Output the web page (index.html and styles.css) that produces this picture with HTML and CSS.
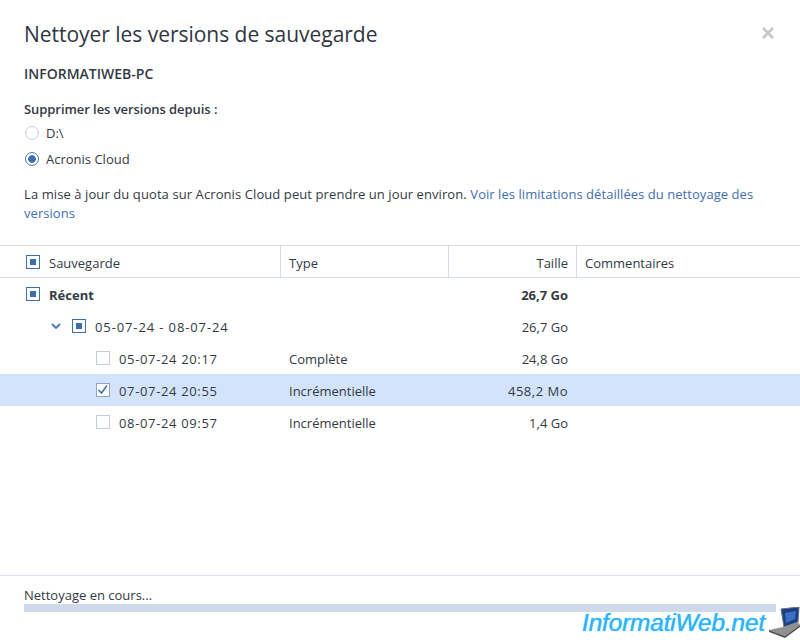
FILE: index.html
```html
<!DOCTYPE html>
<html lang="fr">
<head>
<meta charset="utf-8">
<title>Nettoyer les versions de sauvegarde</title>
<link rel="stylesheet" href="styles.css">
</head>
<body>
<div class="dialog">
  <header class="head">
    <h1 class="title">Nettoyer les versions de sauvegarde</h1>
    <svg class="close" width="14" height="14" viewBox="0 0 14 14"><path d="M2 2l10 10M12 2L2 12" stroke="#c4c6c9" stroke-width="2.6" fill="none"/></svg>
  </header>
  <div class="machine">INFORMATIWEB-PC</div>
  <div class="label">Supprimer les versions depuis :</div>
  <div class="radio-row"><span class="radio"></span>D:\</div>
  <div class="radio-row"><span class="radio on"></span>Acronis Cloud</div>
  <p class="note">La mise à jour du quota sur Acronis Cloud peut prendre un jour environ. <a class="link">Voir les limitations détaillées du nettoyage des versions</a></p>

  <div class="table">
    <div class="row thead">
      <div class="cell first"><span class="box mixed"></span>Sauvegarde</div>
      <div class="cell sep">Type</div>
      <div class="cell sep right">Taille</div>
      <div class="cell sep">Commentaires</div>
    </div>
    <div class="row">
      <div class="cell first bold"><span class="box mixed"></span>Récent</div>
      <div class="cell"></div>
      <div class="cell right bold">26,7 Go</div>
      <div class="cell"></div>
    </div>
    <div class="row">
      <div class="cell lvl1">
        <svg class="chev" width="10" height="6" viewBox="0 0 10 6"><path d="M1 1l4 4 4-4" stroke="#4a76b4" stroke-width="1.8" fill="none"/></svg>
        <span class="box mixed"></span><span class="range">05-07-24 - 08-07-24</span>
      </div>
      <div class="cell"></div>
      <div class="cell right">26,7 Go</div>
      <div class="cell"></div>
    </div>
    <div class="row">
      <div class="cell lvl2"><span class="box"></span><span class="date">05-07-24 20:17</span></div>
      <div class="cell">Complète</div>
      <div class="cell right">24,8 Go</div>
      <div class="cell"></div>
    </div>
    <div class="row selected">
      <div class="cell lvl2">
        <span class="box checked"><svg width="12" height="12" viewBox="0 0 12 12"><path d="M1.5 6l3 3 5.5-7.5" stroke="#3f6db0" stroke-width="1.5" fill="none"/></svg></span><span class="date">07-07-24 20:55</span>
      </div>
      <div class="cell">Incrémentielle</div>
      <div class="cell right wide">458,2 Mo</div>
      <div class="cell"></div>
    </div>
    <div class="row">
      <div class="cell lvl2"><span class="box"></span><span class="date">08-07-24 09:57</span></div>
      <div class="cell">Incrémentielle</div>
      <div class="cell right">1,4 Go</div>
      <div class="cell"></div>
    </div>
  </div>

  <footer class="foot">
    <div class="status">Nettoyage en cours...</div>
    <div class="bar"></div>
  </footer>
</div>

<div class="watermark">
  <span class="wm-text">InformatiWeb.net</span>
  <svg class="laptop" width="32" height="32" viewBox="0 0 32 32">
    <path d="M13 2L31 0 30 15 16 20z" fill="#1b3f86" stroke="#6a6f78" stroke-width="1"/>
    <path d="M17 6l11-2-1 8-9 4z" fill="#3b6fc4"/>
    <path d="M15 20l15-5 2 3-15 11L1 23z" fill="#8f9190"/>
    <path d="M1 23l16 6 15-11v2L17 31 1 25z" fill="#4f5152"/>
  </svg>
</div>
</body>
</html>
```

FILE: styles.css
```css
* { box-sizing: border-box; }
html, body { margin: 0; height: 100%; }
body {
  background: #fff;
  font-family: "Open Sans", "Noto Sans", sans-serif;
  font-size: 13px;
  color: #333a45;
  overflow: hidden;
  position: relative;
}
.dialog {
  width: 800px;
  height: 640px;
  display: flex;
  flex-direction: column;
}
.head {
  display: flex;
  justify-content: space-between;
  align-items: center;
  padding: 18px 25px 0 24px;
  height: 49px;
}
.title {
  margin: 0;
  font-size: 21px;
  font-weight: 400;
  line-height: 30px;
  letter-spacing: -0.03px;
  color: #2f3642;
}
.close { margin-top: -1px; }
.machine {
  margin: 15px 24px 0;
  font-size: 14px;
  font-weight: 600;
  line-height: 20px;
}
.label {
  margin: 15px 24px -1px;
  font-weight: 600;
  line-height: 20px;
  letter-spacing: -0.06px;
}
.radio-row {
  display: flex;
  align-items: center;
  gap: 7px;
  margin: 3px 25px 0;
  height: 23px;
}
.radio {
  width: 14px;
  height: 14px;
  border-radius: 50%;
  border: 1px solid #c5cfe0;
  background: #fff;
  flex: none;
}
.radio.on {
  border-color: #4a76b4;
  background: radial-gradient(circle, #3f6db0 0 3.5px, #fff 4px);
}
.note {
  margin: 15px 24px 0;
  line-height: 19px;
  letter-spacing: 0.09px;
}
.link { color: #3f6db0; letter-spacing: 0.05px; }
.table {
  margin-top: 22px;
  border-top: 1px solid #d8dde8;
  flex: 1;
}
.row {
  display: grid;
  grid-template-columns: 280px 168px 128px 1fr;
  height: 32px;
}
.thead { border-bottom: 1px solid #d4dae6; }
.cell {
  display: flex;
  align-items: center;
  padding: 2px 8px 0;
  white-space: nowrap;
  min-width: 0;
  border-left: 1px solid transparent;
}
.sep { border-left-color: #d4dae6; }
.right { justify-content: flex-end; }
.wide { letter-spacing: 0.5px; }
.bold { font-weight: 700; }
.first { padding-left: 25px; }
.lvl1 { padding-left: 50px; }
.lvl2 { padding-left: 95px; }
.selected { background: #d3e3fb; }
.box {
  width: 14px;
  height: 14px;
  flex: none;
  margin: -2px 9px 0 0;
  border: 1px solid #c5cdda;
  background: #fff;
  display: flex;
  align-items: center;
  justify-content: center;
}
.box.mixed { border-color: #3f6db0; }
.box.mixed::after {
  content: "";
  width: 6px;
  height: 6px;
  background: #3f6db0;
}
.box.checked { border-color: #8da5cc; }
.date { letter-spacing: 0.65px; }
.range { letter-spacing: 0.88px; }
.chev { margin: -2px 11px 0 0; flex: none; }
.foot {
  border-top: 1px solid #dcdfec;
  height: 65px;
  padding: 10px 24px 0;
}
.status { line-height: 18px; }
.bar {
  height: 8px;
  background: #cfd9e9;
}
.watermark {
  position: absolute;
  right: 0;
  bottom: 0;
  height: 34px;
  display: flex;
  align-items: center;
  gap: 3px;
}
.wm-text {
  font-family: "Liberation Sans", sans-serif;
  font-style: italic;
  font-size: 24.5px;
  color: #2fb4fb;
  letter-spacing: -0.2px;
  text-shadow: 0 0 1px #2fb4fb;
}
```
